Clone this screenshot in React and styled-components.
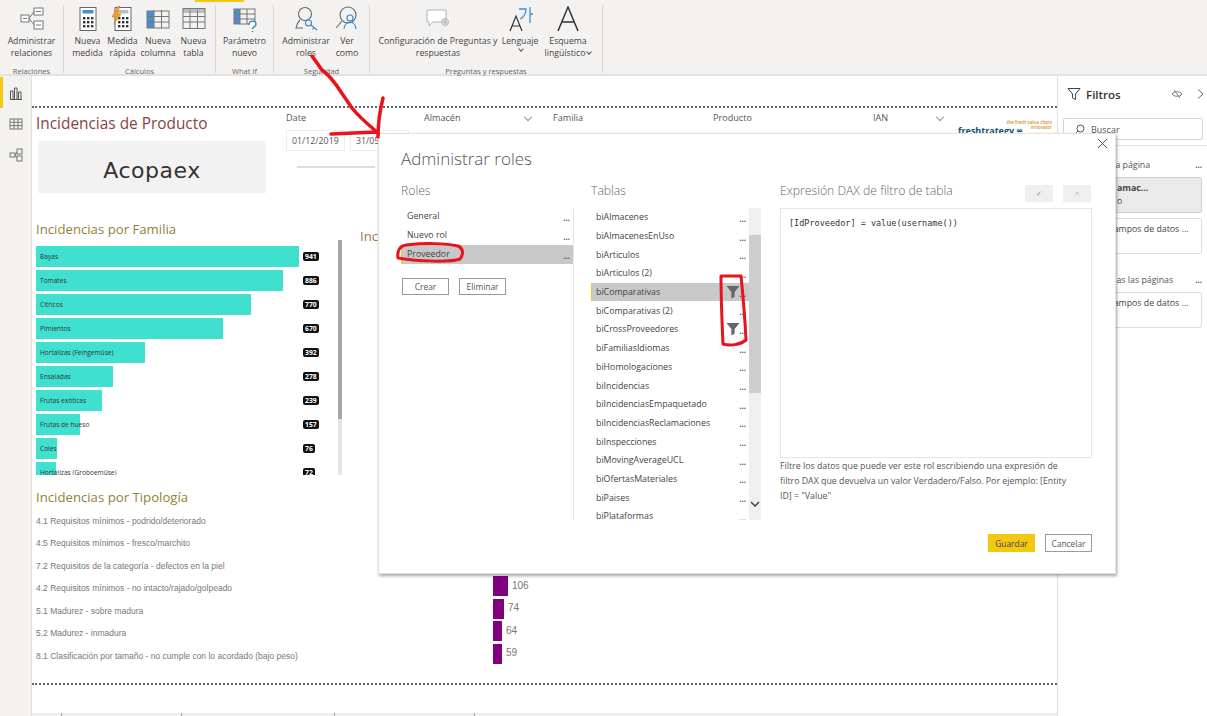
import React from "react";
import styled, { createGlobalStyle } from "styled-components";

const GlobalStyle = createGlobalStyle`
  html, body {
    margin: 0;
    padding: 0;
    background: #fff;
    overflow: hidden;
  }
  * {
    box-sizing: border-box;
  }
`;

const Page = styled.div`
  position: relative;
  width: 1207px;
  height: 716px;
  overflow: hidden;
  display: flex;
  flex-direction: column;
  font-family: "Open Sans", "Noto Sans", sans-serif;
  color: #333;
`;

/* ribbon */
const Ribbon = styled.div`
  position: relative;
  display: flex;
  height: 76px;
  flex: none;
  padding-top: 5px;
  background: #f3f2f1;
  border-bottom: 2px solid #e3e2e1;
`;

const ActiveTab = styled.div`
  position: absolute;
  left: 195px;
  top: 0;
  width: 49px;
  height: 2px;
  background: #f2c811;
`;

const Group = styled.div`
  width: ${({ $w }) => $w}px;
  height: 68px;
  padding-left: ${({ $pad }) => $pad || 0}px;
  display: flex;
  flex-direction: column;
  border-right: 1px solid #d8d7d6;
`;

const GroupItems = styled.div`
  display: flex;
  flex: 1;
`;

const GroupLabel = styled.div`
  margin-left: ${({ $pad }) => -($pad || 0)}px;
  margin-bottom: -4px;
  height: 12px;
  font-size: 7.5px;
  line-height: 12px;
  text-align: center;
  color: #666;
`;

const RibbonItem = styled.div`
  width: ${({ $w }) => $w}px;
  display: flex;
  flex-direction: column;
  align-items: center;
  font-size: 8.7px;
  line-height: 12.4px;
  text-align: center;
  color: #444;
  white-space: nowrap;
`;

const RibbonIcon = styled.svg`
  width: 26px;
  height: 26px;
  margin: 1px 0 3px;
  flex: none;
`;

const Caret = styled.span`
  display: inline-block;
  width: 4px;
  height: 4px;
  margin: 0 0 2px 2px;
  border-right: 1px solid #555;
  border-bottom: 1px solid #555;
  transform: rotate(45deg);
`;

const IconRelations = () => (
  <RibbonIcon viewBox="0 0 26 26" fill="#fff" stroke="#777" strokeWidth="1">
    <rect x="2" y="9" width="8" height="7" />
    <rect x="15" y="2" width="9" height="7" />
    <rect x="15" y="15" width="9" height="8" />
    <path d="M4 12.5h4M17 5.5h5M17 19h5M10 12.5l5-7M10 12.5l5 6" fill="none" />
  </RibbonIcon>
);

const IconCalc = ({ bolt }) => (
  <RibbonIcon viewBox="0 0 26 26">
    <rect x="5" y="1.5" width="16" height="23" fill="#fff" stroke="#666" />
    <rect x="7.5" y="4" width="11" height="3.5" fill={bolt ? "#bbb" : "#4a90d0"} />
    {[11, 15, 19].map((y) =>
      [8, 12, 16].map((x) => <rect key={`${x}${y}`} x={x} y={y} width="2.4" height="2.4" fill="#333" />)
    )}
    {bolt && <path d="M8 0L2 11h4l-2 7 7-10H7l3-8z" fill="#f0a030" stroke="#c87a10" strokeWidth=".6" />}
  </RibbonIcon>
);

const IconTable = ({ tint }) => (
  <RibbonIcon viewBox="0 0 26 26" fill="none" stroke="#777">
    {tint === "col" && <rect x="2" y="5" width="7" height="17" fill="#4a90d0" stroke="none" />}
    {tint === "head" && <rect x="2" y="3" width="22" height="4" fill="#bbb" stroke="none" />}
    <rect x="2" y={tint === "head" ? 2.5 : 5} width="22" height={tint === "head" ? 20 : 17} fill="none" />
    <path d="M9 4v18M16.5 4v18M2 10.5h22M2 16h22" />
  </RibbonIcon>
);

const IconParam = () => (
  <RibbonIcon viewBox="0 0 26 26" fill="none" stroke="#777">
    <rect x="2" y="3" width="6" height="15" fill="#4a90d0" stroke="none" />
    <rect x="2" y="3" width="21" height="15" />
    <path d="M8 3v15M15 3v15M2 8h21M2 13h21" />
    <path d="M17 19c0-5 7-5 7-1 0 3-3.5 2.5-3.5 5M20.5 25v1" stroke="#3a86c8" strokeWidth="1.5" fill="#fff" />
  </RibbonIcon>
);

const IconRoles = () => (
  <RibbonIcon viewBox="0 0 26 26" fill="none" stroke="#666" strokeWidth="1.1">
    <circle cx="12" cy="8" r="6.5" />
    <path d="M7 14c-2 2-3.5 5-4 8h7" />
    <circle cx="15.5" cy="17" r="3" stroke="#3a86c8" />
    <path d="M18 19l6 5M21 21.5l-1.5 2" stroke="#3a86c8" />
  </RibbonIcon>
);

const IconViewAs = () => (
  <RibbonIcon viewBox="0 0 26 26" fill="none" stroke="#666" strokeWidth="1.1">
    <circle cx="14" cy="9" r="8" />
    <path d="M8 15l-6 7" />
    <circle cx="16" cy="12" r="3" stroke="#3a86c8" />
    <path d="M10 23c0-4 3-7 6-7s6 3 6 7" stroke="#3a86c8" />
  </RibbonIcon>
);

const IconQna = () => (
  <RibbonIcon viewBox="0 0 26 26" fill="none" stroke="#b5b5b5">
    <path d="M2 4h19v12H8l-4 4v-4H2z" fill="#fff" />
    <circle cx="20" cy="16" r="3.5" fill="#ddd" />
    <circle cx="20" cy="16" r="1.3" />
  </RibbonIcon>
);

const IconLanguage = () => (
  <RibbonIcon viewBox="0 0 26 26" fill="none">
    <path d="M3 25l6-15 6 15M5 20h8" stroke="#333" strokeWidth="1.2" />
    <path d="M12 3h7c0 4-2 8-6 10M23 1v16M23 8h3" stroke="#3a92d8" strokeWidth="1.3" />
  </RibbonIcon>
);

const IconSchema = () => (
  <RibbonIcon viewBox="0 0 26 26" fill="none">
    <path d="M3 25L13 1l10 24M7 16h12" stroke="#333" strokeWidth="1.5" />
  </RibbonIcon>
);

/* body */
const Body = styled.div`
  flex: 1;
  display: flex;
  min-height: 0;
`;

const Rail = styled.div`
  width: 32px;
  flex: none;
  display: flex;
  flex-direction: column;
  padding-top: 1px;
  background: #f3f2f1;
  border-right: 1px solid #e1e0df;
`;

const RailButton = styled.div`
  height: 31px;
  display: flex;
  align-items: center;
  justify-content: center;
  border-left: 3px solid ${({ $active }) => ($active ? "#f2c811" : "transparent")};
  padding-right: 3px;
`;

const RailIcon = styled.svg`
  width: 14px;
  height: 14px;
`;

const Canvas = styled.div`
  flex: 1;
  min-width: 0;
  display: flex;
  flex-direction: column;
  padding-top: 30px;
  background: #fff;
`;

const Report = styled.div`
  height: 579px;
  padding: 0 0 0 4px;
  border-top: 2px dotted #666;
  border-bottom: 2px dotted #666;
  display: flex;
  flex-direction: column;
`;

const Tabs = styled.div`
  margin-top: 28px;
  height: 3px;
  display: flex;
  background: #f0efee;
`;

const TabTick = styled.div`
  width: ${({ $w }) => $w}px;
  border-right: 1px solid #aaa;
`;

const TopArea = styled.div`
  height: 111px;
  display: flex;
`;

const Headline = styled.div`
  width: 250px;
  flex: none;
`;

const PageTitle = styled.div`
  margin-top: 5px;
  font-size: 15.4px;
  line-height: 22px;
  color: #8c3f3f;
  white-space: nowrap;
`;

const BrandCard = styled.div`
  width: 228px;
  height: 52px;
  margin: 6px 0 0 2px;
  padding-top: 6px;
  display: flex;
  align-items: center;
  justify-content: center;
  font-family: "DejaVu Sans", sans-serif;
  font-size: 22px;
  letter-spacing: 0.5px;
  background: #f2f2f2;
  color: #333;
`;

const Slicers = styled.div`
  display: flex;
  padding-top: 3px;
`;

const Slicer = styled.div`
  width: ${({ $w }) => $w}px;
  flex: none;
  position: relative;
  font-size: 9.1px;
  line-height: 14px;
  color: #555;
`;

const Chevron = styled.i`
  position: absolute;
  top: 3px;
  left: ${({ $x }) => $x}px;
  width: 6px;
  height: 6px;
  border-right: 1px solid #999;
  border-bottom: 1px solid #999;
  transform: rotate(45deg);
`;

const DateRow = styled.div`
  display: flex;
  gap: 5px;
  margin-top: 5px;
`;

const DateBox = styled.div`
  width: 59px;
  height: 21px;
  padding: 3px 5px;
  border: 1px solid #eee;
  font-size: 8.8px;
`;

const SliderTrack = styled.div`
  width: 78px;
  height: 2px;
  margin: 15px 0 0 11px;
  background: #ddd;
`;

const Logo = styled.div`
  width: 94px;
  flex: none;
  display: flex;
  flex-direction: column;
  padding-top: 9px;
`;

const LogoName = styled.div`
  margin-top: -5px;
  font-size: 9px;
  font-weight: 700;
  line-height: 12px;
  color: #12507a;
  white-space: nowrap;
`;

const LogoTagline = styled.div`
  font-size: 4.5px;
  font-weight: 600;
  line-height: 5px;
  text-align: right;
  color: #e08a1e;
  white-space: nowrap;
`;

const MiddleArea = styled.div`
  height: 263px;
  display: flex;
`;

const FamilyChart = styled.div`
  width: 306px;
  flex: none;
`;

const SectionTitle = styled.div`
  font-size: 13.2px;
  line-height: 20px;
  color: #94803a;
  white-space: nowrap;
`;

const BarViewport = styled.div`
  position: relative;
  height: 235px;
  margin-top: 1px;
  padding-top: 5px;
  overflow: hidden;
`;

const BarRow = styled.div`
  position: relative;
  height: 24px;
  padding-top: 1px;
  display: flex;
`;

const BarTrack = styled.div`
  position: relative;
  width: 267px;
  flex: none;
`;

const Bar = styled.div`
  height: 21px;
  background: #40e0d0;
`;

const BarName = styled.span`
  position: absolute;
  left: 4px;
  top: 5px;
  font-size: 6.6px;
  line-height: 11px;
  color: #333;
  white-space: nowrap;
`;

const Pill = styled.span`
  align-self: flex-start;
  margin-top: 6px;
  padding: 0 2px;
  height: 9px;
  font-size: 6.8px;
  font-weight: 700;
  line-height: 9px;
  border-radius: 2px;
  background: #111;
  color: #fff;
`;

const ScrollThumb = styled.div`
  position: absolute;
  right: 0;
  top: 0;
  bottom: 0;
  width: 4px;
  background: linear-gradient(#a6a6a6 0, #a6a6a6 179px, #e4e4e4 179px);
`;

const SecondTitle = styled(SectionTitle)`
  margin: 7px 0 0 18px;
`;

const TypologyTitle = styled(SectionTitle)`
  margin-top: 5px;
`;

const TypologyList = styled.div`
  margin-top: 2.5px;
`;

const TypologyRow = styled.div`
  height: 22.5px;
  display: flex;
  align-items: center;
`;

const TypologyName = styled.div`
  width: 457px;
  flex: none;
  font-family: "Liberation Sans", Arial, sans-serif;
  font-size: 8.5px;
  color: #777;
  white-space: nowrap;
`;

const PurpleBar = styled.div`
  height: 20px;
  margin-top: -4px;
  background: #800080;
`;

const TypologyValue = styled.span`
  margin: -6px 0 0 4px;
  font-family: "Liberation Sans", Arial, sans-serif;
  font-size: 10px;
  color: #777;
`;

/* filters pane */
const FilterPane = styled.div`
  width: 150px;
  flex: none;
  border-left: 1px solid #e1e0df;
  background: #fff;
`;

const PaneHeader = styled.div`
  height: 36px;
  padding: 0 2px 0 9px;
  display: flex;
  align-items: center;
  font-size: 11.5px;
  font-weight: 600;
  color: #333;
`;

const PaneTitle = styled.span`
  margin-left: 5px;
  flex: 1;
`;

const PaneSearch = styled.div`
  width: 140px;
  height: 22px;
  margin: 6px 0 5px 5px;
  padding-left: 10px;
  display: flex;
  align-items: center;
  gap: 6px;
  border: 1px solid #d5d5d5;
  border-radius: 2px;
  font-size: 9px;
  color: #555;
`;

const PaneSection = styled.div`
  border-top: 1px solid #e6e6e6;
  padding: 12px 5px 0 6px;
`;

const PlainSection = styled.div`
  padding: 14px 5px 0 6px;
`;

const SectionHead = styled.div`
  display: flex;
  justify-content: flex-end;
  gap: ${({ $gap }) => $gap}px;
  height: 14px;
  margin-bottom: 5px;
  font-size: 8.8px;
  line-height: 14px;
  color: #555;
  white-space: nowrap;
`;

const FilterCard = styled.div`
  height: 36px;
  margin-bottom: 5px;
  padding: 4px 4px 0 0;
  border: 1px solid ${({ $filled }) => ($filled ? "#d0d0d0" : "#ddd")};
  border-radius: 2px;
  background: ${({ $filled }) => ($filled ? "#eaeaea" : "#fff")};
  font-size: 8.8px;
  line-height: 13px;
  color: #444;
  white-space: nowrap;
`;

const FilterCardText = styled.div`
  margin-left: ${({ $left }) => $left}px;
  font-weight: ${({ $bold }) => ($bold ? 700 : 400)};
`;

/* modal */
const Modal = styled.div`
  position: absolute;
  left: 378px;
  top: 133px;
  width: 738px;
  height: 441px;
  padding: 13px 24px 0 22px;
  background: #fff;
  border: 1px solid #e2e2e2;
  box-shadow: 1px 2px 3px rgba(0, 0, 0, 0.35);
`;

const CloseIcon = styled.svg`
  position: absolute;
  right: 7px;
  top: 4px;
  width: 11px;
  height: 11px;
`;

const ModalTitle = styled.div`
  font-size: 17px;
  font-weight: 300;
  line-height: 24px;
  color: #555;
`;

const Columns = styled.div`
  display: flex;
  margin-top: 12px;
`;

const RolesColumn = styled.div`
  width: 172px;
  flex: none;
`;

const TablesColumn = styled.div`
  width: 171px;
  margin-left: 18px;
  flex: none;
`;

const DaxColumn = styled.div`
  width: 312px;
  margin-left: 18px;
  flex: none;
`;

const ColumnHead = styled.div`
  display: flex;
  justify-content: space-between;
  height: 16px;
  font-size: 12.2px;
  font-weight: 300;
  line-height: 16px;
  color: #666;
`;

const RoleList = styled.div`
  margin-top: 8px;
`;

const ListRow = styled.div`
  height: ${({ $h }) => $h || 18.9}px;
  display: flex;
  align-items: center;
  justify-content: space-between;
  padding: 0 3px 0 5px;
  font-size: 8.8px;
  color: #444;
  background: ${({ $selected }) => ($selected ? "#c8c8c8" : "transparent")};
  border-left: 1px solid ${({ $selected }) => ($selected ? "#f2c811" : "transparent")};
`;

const Dots = styled.span`
  font-size: 8px;
  font-weight: 700;
  line-height: 8px;
  color: #555;
  margin-top: 3px;
`;

const RoleButtons = styled.div`
  display: flex;
  gap: 10px;
  margin: 14px 0 0 1px;
`;

const OutlineButton = styled.div`
  width: 47px;
  height: 17px;
  display: flex;
  align-items: center;
  justify-content: center;
  font-size: 8.4px;
  color: #555;
  border: 1px solid #999;
`;

const TablesBox = styled.div`
  position: relative;
  display: flex;
  height: 312px;
  margin: 9px 0 0 -18px;
  padding-left: 17px;
  border-left: 1px solid #e6e6e6;
  overflow: hidden;
`;

const TablesList = styled.div`
  width: 158px;
  flex: none;
`;

const TableName = styled.span`
  flex: 1;
  margin-left: -1px;
`;

const RowFunnel = styled.svg`
  width: 14px;
  height: 14px;
  margin-right: -1px;
`;

const TablesScroll = styled.div`
  width: 12px;
  flex: none;
  display: flex;
  flex-direction: column;
  background: #efefef;
`;

const ScrollHandle = styled.div`
  height: 158px;
  margin-top: 27px;
  background: #cdcdcd;
`;

const ScrollArrow = styled.svg`
  width: 10px;
  height: 6px;
  margin: auto 1px 13px;
`;

const DaxButtons = styled.div`
  display: flex;
  gap: 10px;
  margin: 2px 1px 0 0;
`;

const DaxAction = styled.div`
  width: 28px;
  height: 17px;
  display: flex;
  align-items: center;
  justify-content: center;
  font-size: 7px;
  color: #888;
  background: #efefef;
`;

const Editor = styled.div`
  height: 250px;
  margin-top: 9px;
  padding: 8px;
  border: 1px solid #e6e6e6;
  font-family: "DejaVu Sans Mono", "Liberation Mono", monospace;
  font-size: 8.5px;
  line-height: 12px;
  color: #333;
`;

const HelpText = styled.div`
  margin-top: 1px;
  width: 294px;
  font-size: 8.8px;
  line-height: 15px;
  color: #555;
`;

const ModalFooter = styled.div`
  position: absolute;
  right: 23px;
  bottom: 21px;
  display: flex;
  gap: 10px;
`;

const SaveButton = styled(OutlineButton)`
  height: 18px;
  border: none;
  background: #f2c811;
  color: #444;
`;

const CancelButton = styled(OutlineButton)`
  height: 18px;
`;

const Annotations = styled.svg`
  position: absolute;
  left: 0;
  top: 0;
  width: 1207px;
  height: 716px;
  pointer-events: none;
`;

const familyData = [
  ["Bayas", 263, 941],
  ["Tomates", 247, 886],
  ["Cítricos", 215, 770],
  ["Pimientos", 187, 670],
  ["Hortalizas (Feingemüse)", 109, 392],
  ["Ensaladas", 77, 278],
  ["Frutas exóticas", 66, 239],
  ["Frutas de hueso", 44, 157],
  ["Coles", 21, 76],
  ["Hortalizas (Groboemüse)", 20, 72],
];

const typologyData = [
  ["4.1 Requisitos mínimos - podrido/deteriorado", 60, 420],
  ["4.5 Requisitos mínimos - fresco/marchito", 50, 350],
  ["7.2 Requisitos de la categoría - defectos en la piel", 30, 210],
  ["4.2 Requisitos mínimos - no intacto/rajado/golpeado", 15, 106],
  ["5.1 Madurez - sobre madura", 11, 74],
  ["5.2 Madurez - inmadura", 9, 64],
  ["8.1 Clasificación por tamaño - no cumple con lo acordado (bajo peso)", 9, 59],
];

const tables = [
  "biAlmacenes",
  "biAlmacenesEnUso",
  "biArticulos",
  "biArticulos (2)",
  "biComparativas",
  "biComparativas (2)",
  "biCrossProveedores",
  "biFamiliasIdiomas",
  "biHomologaciones",
  "biIncidencias",
  "biIncidenciasEmpaquetado",
  "biIncidenciasReclamaciones",
  "biInspecciones",
  "biMovingAverageUCL",
  "biOfertasMateriales",
  "biPaises",
  "biPlataformas",
];

const filteredTables = ["biComparativas", "biCrossProveedores"];

const Funnel = () => (
  <RowFunnel viewBox="0 0 13 13">
    <path d="M0.5 1h12L8 6.5V11L5 12.5V6.5z" fill="#666" />
  </RowFunnel>
);

const App = () => {
  return (
    <Page>
      <GlobalStyle />
      <Ribbon>
        <ActiveTab />
        <Group $w={64}>
          <GroupItems>
            <RibbonItem $w={63}>
              <IconRelations />
              Administrar
              <br />
              relaciones
            </RibbonItem>
          </GroupItems>
          <GroupLabel>Relaciones</GroupLabel>
        </Group>
        <Group $w={152} $pad={6}>
          <GroupItems>
            <RibbonItem $w={35}>
              <IconCalc />
              Nueva
              <br />
              medida
            </RibbonItem>
            <RibbonItem $w={35}>
              <IconCalc bolt />
              Medida
              <br />
              rápida
            </RibbonItem>
            <RibbonItem $w={36}>
              <IconTable tint="col" />
              Nueva
              <br />
              columna
            </RibbonItem>
            <RibbonItem $w={35}>
              <IconTable tint="head" />
              Nueva
              <br />
              tabla
            </RibbonItem>
          </GroupItems>
          <GroupLabel $pad={6}>Cálculos</GroupLabel>
        </Group>
        <Group $w={58}>
          <GroupItems>
            <RibbonItem $w={57}>
              <IconParam />
              Parámetro
              <br />
              nuevo
            </RibbonItem>
          </GroupItems>
          <GroupLabel>What If</GroupLabel>
        </Group>
        <Group $w={96} $pad={10}>
          <GroupItems>
            <RibbonItem $w={44}>
              <IconRoles />
              Administrar
              <br />
              roles
            </RibbonItem>
            <RibbonItem $w={38}>
              <IconViewAs />
              Ver
              <br />
              como
            </RibbonItem>
          </GroupItems>
          <GroupLabel $pad={10}>Seguridad</GroupLabel>
        </Group>
        <Group $w={233} $pad={8}>
          <GroupItems>
            <RibbonItem $w={120}>
              <IconQna />
              Configuración de Preguntas y
              <br />
              respuestas
            </RibbonItem>
            <RibbonItem $w={44}>
              <IconLanguage />
              Lenguaje
              <br />
              <Caret />
            </RibbonItem>
            <RibbonItem $w={52}>
              <IconSchema />
              Esquema
              <br />
              <span>
                lingüístico
                <Caret />
              </span>
            </RibbonItem>
          </GroupItems>
          <GroupLabel $pad={8}>Preguntas y respuestas</GroupLabel>
        </Group>
      </Ribbon>

      <Body>
        <Rail>
          <RailButton $active>
            <RailIcon viewBox="0 0 14 14" fill="none" stroke="#555">
              <path d="M1.5 13V5H4v8M5.5 13V2H8v11M9.5 13V6H12v7M1 13.5h12" />
            </RailIcon>
          </RailButton>
          <RailButton>
            <RailIcon viewBox="0 0 14 14" fill="none" stroke="#777">
              <rect x="1" y="2" width="12" height="10" />
              <path d="M1 5.3h12M1 8.6h12M5 2v10M9 2v10" />
            </RailIcon>
          </RailButton>
          <RailButton>
            <RailIcon viewBox="0 0 14 14" fill="none" stroke="#777">
              <rect x="1" y="5" width="5" height="4" />
              <rect x="8" y="1" width="5" height="5" />
              <rect x="8" y="8" width="5" height="5" />
              <path d="M6 7l2-3M6 7l2 3" />
            </RailIcon>
          </RailButton>
        </Rail>

        <Canvas>
          <Report>
            <TopArea>
              <Headline>
                <PageTitle>Incidencias de Producto</PageTitle>
                <BrandCard>Acopaex</BrandCard>
              </Headline>
              <Slicers>
                <Slicer $w={138}>
                  Date
                  <DateRow>
                    <DateBox>01/12/2019</DateBox>
                    <DateBox>31/05/2020</DateBox>
                  </DateRow>
                  <SliderTrack />
                </Slicer>
                <Slicer $w={129}>
                  Almacén
                  <Chevron $x={101} />
                </Slicer>
                <Slicer $w={160}>Familia</Slicer>
                <Slicer $w={160}>Producto</Slicer>
                <Slicer $w={85}>
                  IAN
                  <Chevron $x={64} />
                </Slicer>
                <Logo>
                  <LogoTagline>
                    the fresh value chain
                    <br />
                    innovator
                  </LogoTagline>
                  <LogoName>freshtrategy ∞</LogoName>
                </Logo>
              </Slicers>
            </TopArea>

            <MiddleArea>
              <FamilyChart>
                <SectionTitle>Incidencias por Familia</SectionTitle>
                <BarViewport>
                  {familyData.map(([name, width, value]) => (
                    <BarRow key={name}>
                      <BarTrack>
                        <Bar style={{ width }} />
                        <BarName>{name}</BarName>
                      </BarTrack>
                      <Pill>{value}</Pill>
                    </BarRow>
                  ))}
                  <ScrollThumb />
                </BarViewport>
              </FamilyChart>
              <SecondTitle>Incidencias por Almacén</SecondTitle>
            </MiddleArea>

            <TypologyTitle>Incidencias por Tipología</TypologyTitle>
            <TypologyList>
              {typologyData.map(([name, width, value]) => (
                <TypologyRow key={name}>
                  <TypologyName>{name}</TypologyName>
                  <PurpleBar style={{ width }} />
                  <TypologyValue>{value}</TypologyValue>
                </TypologyRow>
              ))}
            </TypologyList>
          </Report>
          <Tabs>
            <TabTick $w={30} />
            <TabTick $w={120} />
            <TabTick $w={153} />
            <TabTick $w={140} />
          </Tabs>
        </Canvas>

        <FilterPane>
          <PaneHeader>
            <svg width="14" height="14" viewBox="0 0 14 14" fill="none" stroke="#444">
              <path d="M1 1.5h12L8.5 7v5.5l-3-1.500V7z" />
            </svg>
            <PaneTitle>Filtros</PaneTitle>
            <svg width="12" height="12" viewBox="0 0 12 12" fill="none" stroke="#777" style={{ marginRight: 12 }}>
              <path d="M1 6c2-3 8-3 10 0-2 3-8 3-10 0zM3 2l6 8" />
            </svg>
            <svg width="10" height="12" viewBox="0 0 10 12" fill="none" stroke="#666">
              <path d="M3 1.5L8 6l-5 4.5" />
            </svg>
          </PaneHeader>
          <PaneSearch>
            <svg width="11" height="11" viewBox="0 0 11 11" fill="none" stroke="#555">
              <circle cx="6.5" cy="4.5" r="3.5" />
              <path d="M4 7L1 10" />
            </svg>
            Buscar
          </PaneSearch>
          <PaneSection>
            <SectionHead $gap={45}>
              <span>Filtros en esta página</span>
              <Dots>...</Dots>
            </SectionHead>
            <FilterCard $filled>
              <FilterCardText $left={52} $bold>
                amac...
              </FilterCardText>
              <FilterCardText $left={52}>o</FilterCardText>
            </FilterCard>
            <FilterCard>
              <FilterCardText $left={10}>Agregar campos de datos ...</FilterCardText>
            </FilterCard>
          </PaneSection>
          <PlainSection>
            <SectionHead $gap={22}>
              <span>Filtros en todas las páginas</span>
              <Dots>...</Dots>
            </SectionHead>
            <FilterCard>
              <FilterCardText $left={10}>Agregar campos de datos ...</FilterCardText>
            </FilterCard>
          </PlainSection>
        </FilterPane>
      </Body>

      <Modal>
        <CloseIcon viewBox="0 0 11 11" stroke="#555" fill="none">
          <path d="M1 1l9 9M10 1l-9 9" />
        </CloseIcon>
        <ModalTitle>Administrar roles</ModalTitle>
        <Columns>
          <RolesColumn>
            <ColumnHead>Roles</ColumnHead>
            <RoleList>
              <ListRow>
                General
                <Dots>...</Dots>
              </ListRow>
              <ListRow>
                Nuevo rol
                <Dots>...</Dots>
              </ListRow>
              <ListRow $selected>
                Proveedor
                <Dots>...</Dots>
              </ListRow>
            </RoleList>
            <RoleButtons>
              <OutlineButton>Crear</OutlineButton>
              <OutlineButton>Eliminar</OutlineButton>
            </RoleButtons>
          </RolesColumn>

          <TablesColumn>
            <ColumnHead>Tablas</ColumnHead>
            <TablesBox>
              <TablesList>
                {tables.map((name) => (
                  <ListRow key={name} $h={18.7} $selected={name === "biComparativas"}>
                    <TableName>{name}</TableName>
                    {filteredTables.includes(name) && <Funnel />}
                    <Dots>...</Dots>
                  </ListRow>
                ))}
              </TablesList>
              <TablesScroll>
                <ScrollHandle />
                <ScrollArrow viewBox="0 0 10 6" fill="none" stroke="#444" strokeWidth="1.5">
                  <path d="M1 1l4 4 4-4" />
                </ScrollArrow>
              </TablesScroll>
            </TablesBox>
          </TablesColumn>

          <DaxColumn>
            <ColumnHead>
              Expresión DAX de filtro de tabla
              <DaxButtons>
                <DaxAction>✓</DaxAction>
                <DaxAction>×</DaxAction>
              </DaxButtons>
            </ColumnHead>
            <Editor>[IdProveedor] = value(username())</Editor>
            <HelpText>
              Filtre los datos que puede ver este rol escribiendo una expresión de filtro DAX que devuelva un valor
              Verdadero/Falso. Por ejemplo: [Entity ID] = "Value"
            </HelpText>
          </DaxColumn>
        </Columns>
        <ModalFooter>
          <SaveButton>Guardar</SaveButton>
          <CancelButton>Cancelar</CancelButton>
        </ModalFooter>
      </Modal>

      <Annotations viewBox="0 0 1207 716" fill="none" stroke="#e8141c" strokeLinecap="round" strokeLinejoin="round">
        <path d="M312 56L322 70C330 76 336 84 341 92L352 108C360 118 370 126 378 133" strokeWidth="3.5" />
        <path d="M331 134L377 132M383 98C380 110 378 122 378 137" strokeWidth="3.5" />
        <path
          d="M398 258C397 252 399 246 406 245C424 243 446 243 458 246C463 248 464 254 460 259C452 262 420 262 398 258Z"
          strokeWidth="3"
        />
        <path d="M721 276L741 276C743 296 745 318 746 340C740 345 730 346 723 344C722 322 721 298 721 276Z" strokeWidth="3" />
      </Annotations>
    </Page>
  );
};

export default App;
